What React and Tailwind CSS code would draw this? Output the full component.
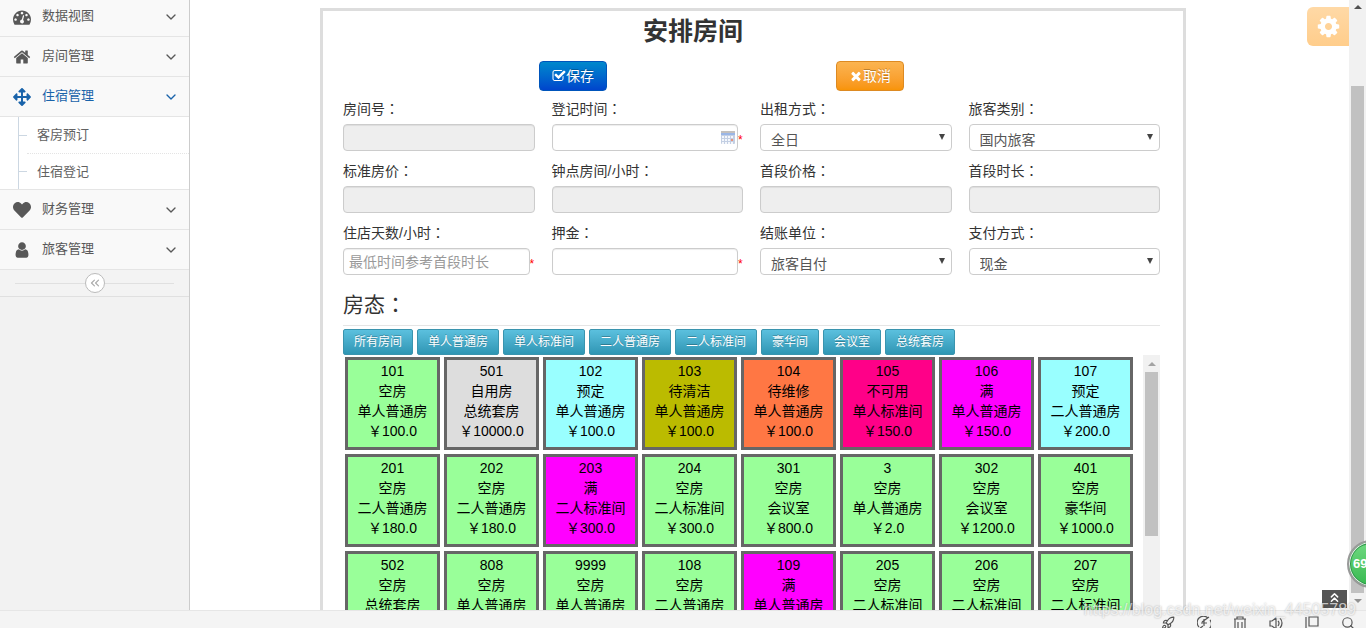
import { FaArrowsAlt, FaHeart } from 'react-icons/fa';
import { ChevronDown, ChevronsLeft, ChevronsUp, Rocket, Search } from 'lucide-react';

const ICON_PATHS = {
  dashboard:
    'M384 1152q0-53-37.5-90.5t-90.5-37.5-90.5 37.5-37.5 90.5 37.5 90.5 90.5 37.5 90.5-37.5 37.5-90.5zm192-448q0-53-37.5-90.5t-90.5-37.5-90.5 37.5-37.5 90.5 37.5 90.5 90.5 37.5 90.5-37.5 37.5-90.5zm428 481l101-382q6-26-7.5-48.5t-38.5-29.5-48 6.5-30 39.5l-101 382q-60 5-107 43.5t-63 98.5q-20 77 20 146t117 89 146-20 89-117q16-60-6-117t-72-91zm660-33q0-53-37.5-90.5t-90.5-37.5-90.5 37.5-37.5 90.5 37.5 90.5 90.5 37.5 90.5-37.5 37.5-90.5zm-640-640q0-53-37.5-90.5t-90.5-37.5-90.5 37.5-37.5 90.5 37.5 90.5 90.5 37.5 90.5-37.5 37.5-90.5zm448 192q0-53-37.5-90.5t-90.5-37.5-90.5 37.5-37.5 90.5 37.5 90.5 90.5 37.5 90.5-37.5 37.5-90.5zm320 448q0 261-141 483-19 29-54 29h-1402q-35 0-54-29-141-221-141-483 0-182 71-348t191-286 286-191 348-71 348 71 286 191 191 286 71 348z',
  home:
    'M1472 992v480q0 26-19 45t-45 19h-384v-384h-256v384h-384q-26 0-45-19t-19-45v-480q0-1 .5-3t.5-3l575-474 575 474q1 2 1 6zm223-69l-62 74q-8 9-21 11h-3q-13 0-21-7l-692-577-692 577q-12 8-24 7-13-2-21-11l-62-74q-8-10-7-23.5t11-21.5l719-599q32-26 76-26t76 26l244 204v-195q0-14 9-23t23-9h192q14 0 23 9t9 23v408l219 182q10 8 11 21.5t-7 23.5z',
  user:
    'M1536 1399q0 109-62.5 187t-150.5 78h-854q-88 0-150.5-78t-62.5-187q0-85 8.5-160.5t31.5-152 58.5-131 94-89 134.5-34.5q131 128 313 128t313-128q76 0 134.5 34.5t94 89 58.5 131 31.5 152 8.5 160.5zm-256-887q0 159-112.5 271.5t-271.5 112.5-271.5-112.5-112.5-271.5 112.5-271.5 271.5-112.5 271.5 112.5 112.5 271.5z',
  cog:
    'M1152 896q0-106-75-181t-181-75-181 75-75 181 75 181 181 75 181-75 75-181zm512-109v222q0 12-8 23t-20 13l-185 28q-19 54-39 91 35 50 107 138 10 12 10 25t-9 23q-27 37-99 108t-94 71q-12 0-26-9l-138-108q-44 23-91 38-16 136-29 186-7 28-36 28h-222q-14 0-24.5-8.5t-11.5-21.5l-28-184q-49-16-90-37l-141 107q-10 9-25 9-14 0-25-11-126-114-165-168-7-10-7-23 0-12 8-23 15-21 51-66.5t54-70.5q-27-50-41-99l-183-27q-13-2-21-12.5t-8-23.5v-222q0-12 8-23t19-13l186-28q14-46 39-92-40-57-107-138-10-12-10-24 0-10 9-23 26-36 98.5-107.5t94.5-71.5q13 0 26 10l138 107q44-23 91-38 16-136 29-186 7-28 36-28h222q14 0 24.5 8.5t11.5 21.5l28 184q49 16 90 37l142-107q9-9 24-9 13 0 25 10 129 119 165 170 7 8 7 22 0 12-8 23-15 21-51 66.5t-54 70.5q26 50 41 98l183 28q13 2 21 12.5t8 23.5z',
  check:
    'M1472 930v318q0 119-84.5 203.5t-203.5 84.5h-832q-119 0-203.5-84.5t-84.5-203.5v-832q0-119 84.5-203.5t203.5-84.5h832q63 0 117 25 15 7 18 23 3 17-9 29l-49 49q-10 10-23 10-3 0-9-2-23-6-45-6h-832q-66 0-113 47t-47 113v832q0 66 47 113t113 47h832q66 0 113-47t47-113v-254q0-13 9-22l64-64q10-10 23-10 6 0 12 3 20 8 20 29zm231-489l-814 814q-24 24-57 24t-57-24l-430-430q-24-24-24-57t24-57l110-110q24-24 57-24t57 24l263 263 647-647q24-24 57-24t57 24l110 110q24 24 24 57t-24 57z',
  times:
    'M1490 1322q0 40-28 68l-136 136q-28 28-68 28t-68-28l-294-294-294 294q-28 28-68 28t-68-28l-136-136q-28-28-28-68t28-68l294-294-294-294q-28-28-28-68t28-68l136-136q28-28 68-28t68 28l294 294 294-294q28-28 68-28t68 28l136 136q28 28 28 68t-28 68l-294 294 294 294q28 28 28 68z',
};

function Icon({ name, className }) {
  return (
    <svg viewBox="0 0 1792 1792" fill="currentColor" className={className} aria-hidden="true">
      <path d={ICON_PATHS[name]} />
    </svg>
  );
}

const MENU = [
  { label: '数据视图', icon: <Icon name="dashboard" className="size-[18px]" /> },
  { label: '房间管理', icon: <Icon name="home" className="size-[18px]" /> },
  {
    label: '住宿管理',
    icon: <FaArrowsAlt className="size-[18px]" />,
    active: true,
    children: ['客房预订', '住宿登记'],
  },
  { label: '财务管理', icon: <FaHeart className="size-[18px]" /> },
  { label: '旅客管理', icon: <Icon name="user" className="size-[18px]" /> },
];

const FIELDS = [
  { id: 'roomNo', label: '房间号', type: 'disabled' },
  { id: 'checkIn', label: '登记时间', type: 'date', required: true },
  { id: 'rentMode', label: '出租方式', type: 'select', value: '全日' },
  { id: 'guestType', label: '旅客类别', type: 'select', value: '国内旅客' },
  { id: 'price', label: '标准房价', type: 'disabled' },
  { id: 'hourly', label: '钟点房间/小时', type: 'disabled' },
  { id: 'firstPrice', label: '首段价格', type: 'disabled' },
  { id: 'firstHours', label: '首段时长', type: 'disabled' },
  { id: 'days', label: '住店天数/小时', type: 'text', placeholder: '最低时间参考首段时长', required: true },
  { id: 'deposit', label: '押金', type: 'text', required: true },
  { id: 'payer', label: '结账单位', type: 'select', value: '旅客自付' },
  { id: 'payment', label: '支付方式', type: 'select', value: '现金' },
];

const ROOM_TYPES = ['所有房间', '单人普通房', '单人标准间', '二人普通房', '二人标准间', '豪华间', '会议室', '总统套房'];

const STATUS_COLORS = {
  空房: 'bg-[#99ff99]',
  自用房: 'bg-[#dddddd]',
  预定: 'bg-[#99ffff]',
  待清洁: 'bg-[#bbbb00]',
  待维修: 'bg-[#ff7744]',
  不可用: 'bg-[#ff0088]',
  满: 'bg-[#ff00ff]',
};

const ROOMS = [
  ['101', '空房', '单人普通房', '100.0'],
  ['501', '自用房', '总统套房', '10000.0'],
  ['102', '预定', '单人普通房', '100.0'],
  ['103', '待清洁', '单人普通房', '100.0'],
  ['104', '待维修', '单人普通房', '100.0'],
  ['105', '不可用', '单人标准间', '150.0'],
  ['106', '满', '单人普通房', '150.0'],
  ['107', '预定', '二人普通房', '200.0'],
  ['201', '空房', '二人普通房', '180.0'],
  ['202', '空房', '二人普通房', '180.0'],
  ['203', '满', '二人标准间', '300.0'],
  ['204', '空房', '二人标准间', '300.0'],
  ['301', '空房', '会议室', '800.0'],
  ['3', '空房', '单人普通房', '2.0'],
  ['302', '空房', '会议室', '1200.0'],
  ['401', '空房', '豪华间', '1000.0'],
  ['502', '空房', '总统套房'],
  ['808', '空房', '单人普通房'],
  ['9999', '空房', '单人普通房'],
  ['108', '空房', '二人普通房'],
  ['109', '满', '单人普通房'],
  ['205', '空房', '二人标准间'],
  ['206', '空房', '二人标准间'],
  ['207', '空房', '二人标准间'],
];

// Full-width colon, centred in its cell
function Colon() {
  return <span className="font-['Noto_Sans_CJK_TC',sans-serif]">：</span>;
}

function Sidebar() {
  return (
    <aside className="w-[190px] shrink-0 border-r border-[#cccccc] bg-[#f2f2f2] text-[13px] leading-5">
      <nav className="-mt-[3px]">
        {MENU.map((item) => (
          <div key={item.label}>
            <button
              type="button"
              className={`flex h-10 w-full items-center border-b border-[#e5e5e5] bg-[#f9f9f9] pr-2.5 pl-3 ${
                item.active ? 'text-[#1963aa]' : 'text-[#585858]'
              }`}
            >
              <span className="mr-2.5 flex w-5 justify-center">{item.icon}</span>
              <span className="flex-1 pb-0.5 text-left">{item.label}</span>
              <ChevronDown size={16} strokeWidth={2} />
            </button>
            {item.children && (
              <ul className="border-b border-[#e5e5e5] bg-white pl-[18px]">
                {item.children.map((child, i) => (
                  <li key={child} className="flex h-9 items-center border-l border-[#ccd7e2]">
                    <span className="h-px w-2 bg-[#ccd7e2]" />
                    <a
                      href="#"
                      className={`flex h-full flex-1 items-center pl-2.5 text-[#616161] ${
                        i > 0 ? 'border-t border-dotted border-[#e4e4e4]' : ''
                      }`}
                    >
                      {child}
                    </a>
                  </li>
                ))}
              </ul>
            )}
          </div>
        ))}
      </nav>
      <div className="flex h-[27px] items-center border-b border-[#e0e0e0] bg-[#f3f3f3] px-[15px]">
        <span className="h-px flex-1 bg-[#e0e0e0]" />
        <button
          type="button"
          aria-label="collapse"
          className="flex size-5 items-center justify-center rounded-full border border-[#bbbbbb] bg-white text-[#aaaaaa]"
        >
          <ChevronsLeft size={14} strokeWidth={2} />
        </button>
        <span className="h-px flex-1 bg-[#e0e0e0]" />
      </div>
    </aside>
  );
}

function CalendarIcon() {
  return (
    <svg width="14" height="14" viewBox="0 0 14 14" className="absolute top-[7px] right-[3px]" aria-hidden="true">
      <rect x="0" y="1" width="14" height="12" rx="1" fill="#c3cfe3" />
      <rect x="0" y="0" width="14" height="2" fill="#c3c0bd" />
      <rect x="0" y="2" width="14" height="2" fill="#9ab6e6" />
      {[5, 8, 11].map((y) =>
        [1, 4, 7, 10].map((x) => (
          <rect key={`${x}-${y}`} x={x} y={y} width="2" height="2" fill={x === 10 && y === 8 ? '#e8927c' : '#f4f7fc'} />
        ))
      )}
    </svg>
  );
}

const INPUT = 'block h-[27px] w-full rounded border border-[#cccccc] text-sm text-[#555555]';

function Field({ field }) {
  const { id, label, type, value, placeholder, required } = field;
  return (
    <div className="min-w-0">
      <label htmlFor={id} className="mb-1.5 block h-5 text-sm leading-5">
        {label}
        <Colon />
      </label>
      {type === 'select' ? (
        <div className="relative">
          <select id={id} defaultValue={value} className={`${INPUT} appearance-none bg-white pt-1 pl-2.5 leading-5`}>
            <option>{value}</option>
          </select>
          <svg width="6" height="6" viewBox="0 0 6 6" className="absolute top-2.5 right-[7px]" aria-hidden="true">
            <path d="M0 0h6L3 6z" fill="#444444" />
          </svg>
        </div>
      ) : (
        <div className="flex items-center">
          <div className="relative flex-1">
            <input
              id={id}
              type="text"
              disabled={type === 'disabled'}
              placeholder={placeholder}
              className={`${INPUT} px-[5px] placeholder:text-[#999999] ${
                type === 'disabled' ? 'bg-[#eeeeee]' : 'bg-white'
              } shadow-[inset_0_1px_1px_rgba(0,0,0,0.075)]`}
            />
            {type === 'date' && <CalendarIcon />}
          </div>
          {required && <span className="w-[5px] pt-1 text-xs leading-5 text-[#ff0000]">*</span>}
        </div>
      )}
    </div>
  );
}

function RoomCard({ room }) {
  const [no, status, type, price] = room;
  return (
    <div className={`h-[93px] w-[95px] border-[3px] border-[#666666] pt-px text-center text-sm leading-5 text-black ${STATUS_COLORS[status]}`}>
      <div>{no}</div>
      <div>{status}</div>
      <div>{type}</div>
      {price && <div>￥{price}</div>}
    </div>
  );
}

function Arrow({ up, color }) {
  return (
    <svg width="8" height="4" viewBox="0 0 8 4" className="shrink-0" aria-hidden="true">
      <path d={up ? 'M0 4h8L4 0z' : 'M0 0h8L4 4z'} fill={color} />
    </svg>
  );
}

function RoomPanel() {
  return (
    <section className="mr-[26px] ml-[130px] w-full max-w-[866px] border-[3px] border-[#dddddd] pr-[23px] pl-5 text-[#333333]">
      <h3 className="mr-[117px] text-center text-[25px] leading-10 font-bold">安排房间</h3>
      <div className="mt-[10px] mb-[7px] flex gap-[229px] pl-[196px] text-sm leading-5 text-white">
        <button
          type="button"
          className="flex h-[30px] w-[68px] items-center justify-center rounded border border-[#0055bb] bg-linear-to-b from-[#0088cc] to-[#0044cc] text-shadow-[0_-1px_0_rgba(0,0,0,0.25)]"
        >
          <Icon name="check" className="size-[14px]" />
          保存
        </button>
        <button
          type="button"
          className="flex h-[30px] w-[68px] items-center justify-center rounded border border-[#dd8a22] bg-linear-to-b from-[#fbb450] to-[#f89406] text-shadow-[0_-1px_0_rgba(0,0,0,0.25)]"
        >
          <Icon name="times" className="size-[14px]" />
          取消
        </button>
      </div>
      <form className="grid grid-cols-4 gap-x-[17px] gap-y-[9px]">
        {FIELDS.map((field) => (
          <Field key={field.id} field={field} />
        ))}
      </form>
      <h4 className="mt-2 border-b border-[#e5e5e5] text-[21px] leading-10">
        房态
        <Colon />
      </h4>
      <div className="mt-[3px] flex flex-wrap gap-1 text-xs text-white">
        {ROOM_TYPES.map((type) => (
          <button
            key={type}
            type="button"
            className="h-[26px] rounded-xs border border-[#3a94ae] bg-linear-to-b from-[#5bc0de] to-[#2f96b4] px-2.5 whitespace-nowrap text-shadow-[0_-1px_0_rgba(0,0,0,0.25)]"
          >
            {type}
          </button>
        ))}
      </div>
      <div className="flex">
        <div className="flex flex-1 flex-wrap gap-1 p-0.5">
          {ROOMS.map((room) => (
            <RoomCard key={room[0]} room={room} />
          ))}
        </div>
        <div className="flex w-[17px] flex-col items-center bg-[#f1f1f1] pt-[7px]">
          <Arrow up color="#a3a3a3" />
          <div className="mt-1.5 h-[164px] w-[13px] bg-[#c1c1c1]" />
        </div>
      </div>
    </section>
  );
}

function BarIcon({ d }) {
  return (
    <svg width="14" height="14" viewBox="0 0 14 14" fill="none" stroke="currentColor" strokeWidth="1.2" aria-hidden="true">
      <path d={d} />
    </svg>
  );
}

function StatusBar() {
  return (
    <footer className="flex h-[18px] shrink-0 items-start justify-end gap-[22px] overflow-hidden border-t border-[#e6e6e6] bg-[#f4f4f4] pt-[5px] pr-[11px] text-[#555555]">
      <Rocket size={14} strokeWidth={2} />
      <BarIcon d="M2 11a6 6 0 0 1 9-9M13 4a6 6 0 0 1-9 8M12 1L5 6M7 3v7M4 7h6M2 13l4-3" />
      <BarIcon d="M1 3h12M4 3V1h6v2M2 3v11h10V3M5 6v6M9 6v6" />
      <BarIcon d="M1 5v5h2l4 3V2L3 5zM9 5q2 2 0 5M11 2q4 5 0 10" />
      <BarIcon d="M1 1v13M4 1h9v9H4z" />
      <Search size={14} strokeWidth={2} />
    </footer>
  );
}

export default function App() {
  return (
    <div className="relative flex h-screen flex-col overflow-hidden bg-white font-['Liberation_Sans','Noto_Sans_CJK_SC',sans-serif]">
      <div className="flex min-h-0 flex-1 overflow-hidden">
        <Sidebar />
        <main className="min-w-0 flex-1 overflow-hidden pt-2">
          <RoomPanel />
        </main>
        <div className="flex w-[17px] shrink-0 flex-col items-center bg-[#f1f1f1] pt-[5px] pb-[7px]">
          <Arrow up color="#505050" />
          <div className="mt-[77px] mb-1.5 w-[13px] flex-1 bg-[#c1c1c1]" />
          <Arrow color="#909090" />
        </div>
      </div>
      <StatusBar />

      {/* Floating controls */}
      <button
        type="button"
        aria-label="settings"
        className="absolute top-[7px] right-[17px] flex h-[39px] w-[42px] items-center justify-center rounded-l-md bg-linear-to-b from-[#ffd9a6] to-[#ffcd8b] text-white"
      >
        <Icon name="cog" className="size-[25px]" />
      </button>
      <button
        type="button"
        aria-label="back to top"
        className="absolute right-[19px] bottom-5 flex h-[18px] w-[25px] items-start justify-center bg-[#555555] text-white"
      >
        <ChevronsUp size={15} strokeWidth={2.4} />
      </button>
      <div className="absolute -right-[29px] bottom-10 flex size-12 items-center rounded-full border-2 border-[#999999] bg-linear-to-b from-[#6fd980] to-[#35b950] pl-1 text-[13px] font-bold text-white shadow-[inset_0_0_0_1px_#eeeeee,inset_0_0_0_2px_#2b9a48]">
        69
      </div>
      <div className="pointer-events-none absolute right-2.5 bottom-2 text-base leading-5 text-white/70 text-shadow-[0_0_2px_rgba(0,0,0,0.3)]">
        https://blog.csdn.net/weixin_44505789
      </div>
    </div>
  );
}
